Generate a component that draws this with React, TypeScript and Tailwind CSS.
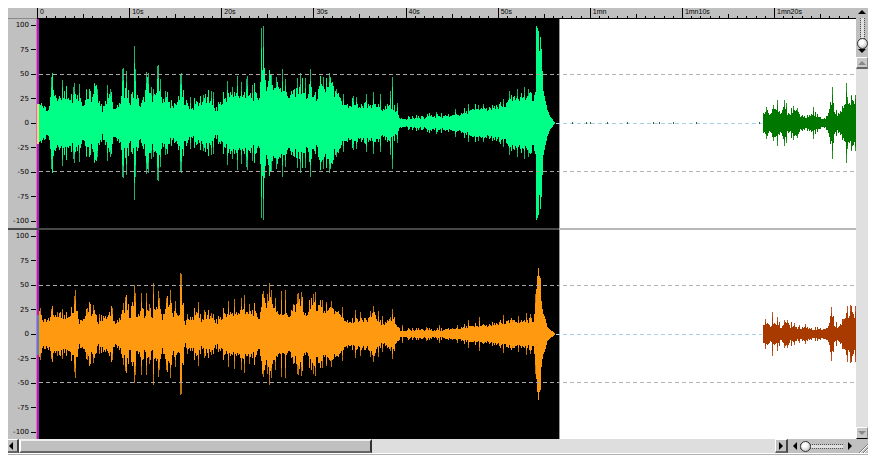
import { useState } from "react";
import clsx from "clsx";

type Point = [number, number];

type Clip = {
    color: string;
    peakColor: string;
    envelope: Point[];
    peaks: Point[];
};

type Track = {
    name: string;
    center: number;
    selected: Clip;
    rest: Clip;
    specks: number[];
};

const PLOT_LEFT = 39;
const PLOT_WIDTH = 817;
const PLOT_HEIGHT = 209;
const SELECTION_END = 559;

const levels = [100, 75, 50, 25, 0, -25, -50, -75, -100];
const times = ["0", "10s", "20s", "30s", "40s", "50s", "1mn", "1mn10s", "1mn20s"];

const left: Track = {
    name: "Left channel",
    center: 104,
    selected: {
        color: "#00ff87",
        peakColor: "#1fb56e",
        envelope: [
            [39, 18], [43, 18], [48, 12], [50, 30], [52, 38], [55, 26], [58, 27], [60, 24], [62, 34], [66, 30],
            [69, 26], [72, 24], [75, 30], [79, 26], [83, 20], [86, 28], [90, 24], [94, 30], [98, 26], [102, 14],
            [106, 22], [110, 28], [114, 15], [119, 18], [122, 30], [126, 36], [129, 18], [132, 24], [136, 30],
            [140, 17], [144, 27], [147, 42], [150, 28], [154, 24], [158, 30], [162, 26], [166, 25], [170, 20],
            [173, 14], [176, 22], [180, 27], [184, 24], [188, 18], [192, 16], [196, 20], [200, 22], [204, 23],
            [208, 24], [212, 17], [216, 14], [220, 17], [224, 26], [230, 29], [240, 27], [250, 29], [259, 28],
            [261, 55], [264, 50], [266, 42], [270, 43], [274, 37], [279, 40], [284, 36], [289, 28], [293, 26],
            [297, 33], [302, 33], [307, 28], [312, 29], [316, 28], [320, 36], [325, 35], [328, 36], [331, 44],
            [334, 30], [338, 25], [344, 19], [350, 17], [354, 20], [360, 17], [365, 20], [370, 16], [376, 18],
            [382, 16], [388, 17], [394, 16], [399, 5], [405, 4], [412, 5], [420, 5], [430, 7], [440, 7],
            [450, 7], [460, 9], [468, 12], [476, 14], [486, 14], [496, 16], [504, 18], [512, 23], [518, 28],
            [526, 27], [534, 28], [535, 28], [536, 97], [538, 92], [539, 72], [540, 86], [541, 74], [542, 52],
            [543, 32], [545, 22], [547, 13], [550, 6], [554, 1],
        ],
        peaks: [
            [51, 46], [62, 43], [73, 36], [74, 40], [79, 39], [86, 34], [94, 40], [97, 34], [107, 38], [110, 34],
            [122, 54], [123, 55], [126, 52], [134, 77], [135, 54], [146, 51], [148, 50], [151, 36], [153, 34],
            [157, 57], [158, 58], [160, 44], [165, 32], [180, 48], [181, 50], [190, 26], [203, 28], [211, 32],
            [213, 31], [227, 42], [232, 36], [237, 47], [241, 41], [246, 44], [247, 47], [252, 38], [261, 95],
            [263, 97], [271, 49], [276, 46], [282, 54], [285, 44], [297, 45], [300, 50], [305, 45], [310, 54],
            [323, 46], [329, 50], [330, 46], [336, 34], [343, 29], [353, 27], [356, 26], [366, 29], [373, 31],
            [380, 29], [390, 32], [392, 46], [397, 20], [436, 11], [455, 14], [468, 19], [478, 18], [483, 19],
            [503, 24], [509, 32], [517, 34], [524, 36], [528, 34],
        ],
    },
    rest: {
        color: "#007800",
        peakColor: "#2d902d",
        envelope: [
            [763, 11], [767, 14], [769, 7], [773, 13], [776, 16], [779, 9], [784, 18], [787, 9], [791, 10],
            [796, 13], [800, 8], [805, 5], [809, 7], [813, 9], [817, 7], [822, 5], [825, 5], [828, 11],
            [831, 18], [833, 16], [836, 9], [839, 10], [842, 15], [845, 22], [849, 20], [853, 22], [855, 26],
        ],
        peaks: [
            [766, 16], [773, 18], [777, 23], [784, 23], [786, 20], [793, 17], [797, 15], [813, 16], [832, 36],
            [846, 40], [847, 26], [851, 28], [855, 28],
        ],
    },
    specks: [572, 586, 590, 607, 627, 653, 659, 673, 696, 759],
};

const right: Track = {
    name: "Right channel",
    center: 104,
    selected: {
        color: "#ff9a10",
        peakColor: "#c0750e",
        envelope: [
            [39, 22], [42, 15], [46, 14], [49, 16], [51, 22], [55, 18], [60, 21], [66, 18], [70, 20], [74, 30],
            [76, 28], [79, 13], [83, 17], [88, 24], [93, 20], [97, 11], [101, 17], [106, 17], [111, 22],
            [115, 11], [119, 14], [123, 24], [126, 36], [129, 14], [134, 32], [137, 16], [141, 28], [145, 18],
            [149, 25], [153, 19], [158, 28], [162, 18], [166, 30], [170, 28], [173, 16], [176, 26], [178, 16],
            [181, 34], [185, 12], [189, 17], [193, 18], [197, 20], [201, 15], [206, 18], [212, 15], [216, 13],
            [220, 13], [224, 22], [229, 21], [233, 20], [238, 21], [242, 26], [247, 20], [252, 24], [256, 20],
            [259, 17], [262, 33], [267, 34], [272, 32], [277, 22], [282, 22], [286, 22], [290, 18], [294, 24],
            [300, 34], [304, 20], [308, 22], [313, 34], [317, 28], [322, 24], [327, 23], [331, 26], [336, 20],
            [341, 17], [346, 13], [352, 12], [357, 15], [362, 15], [368, 15], [373, 21], [378, 13], [384, 11],
            [389, 14], [393, 18], [396, 9], [401, 3], [410, 4], [420, 4], [440, 4], [455, 5], [464, 7],
            [474, 8], [485, 8], [496, 10], [506, 12], [516, 13], [526, 14], [533, 15], [535, 25], [536, 50],
            [538, 66], [539, 58], [540, 56], [541, 30], [543, 20], [545, 15], [547, 7], [550, 4], [554, 1],
        ],
        peaks: [
            [40, 26], [51, 25], [57, 22], [62, 25], [74, 38], [75, 44], [87, 26], [93, 29], [99, 20], [112, 26],
            [123, 31], [125, 37], [134, 49], [135, 41], [141, 41], [146, 41], [149, 30], [153, 51], [158, 43],
            [159, 36], [166, 36], [170, 44], [175, 33], [180, 61], [181, 60], [187, 20], [194, 25], [198, 32],
            [204, 24], [211, 21], [228, 33], [234, 35], [241, 36], [244, 39], [249, 30], [262, 35], [263, 43],
            [267, 40], [269, 51], [271, 44], [275, 36], [281, 43], [285, 44], [293, 30], [297, 40], [298, 41],
            [301, 42], [309, 28], [313, 40], [315, 42], [322, 34], [326, 32], [331, 33], [342, 27], [355, 24],
            [360, 22], [370, 23], [373, 28], [378, 23], [382, 18], [390, 17], [392, 25], [402, 9], [426, 7],
            [439, 9], [452, 6], [457, 9], [468, 14], [479, 17], [492, 11], [503, 19], [512, 14], [518, 18],
            [526, 21], [530, 20], [535, 40],
        ],
    },
    rest: {
        color: "#a83a00",
        peakColor: "#b95625",
        envelope: [
            [763, 10], [766, 13], [770, 7], [773, 10], [777, 11], [781, 7], [786, 14], [790, 8], [795, 7],
            [800, 6], [805, 6], [812, 5], [820, 5], [826, 6], [829, 11], [832, 20], [834, 10], [838, 7],
            [842, 13], [846, 20], [849, 17], [851, 22], [855, 19],
        ],
        peaks: [
            [765, 15], [772, 22], [777, 17], [784, 14], [787, 14], [794, 11], [799, 9], [805, 10], [831, 27],
            [843, 15], [847, 28], [850, 29], [852, 22], [855, 28],
        ],
    },
    specks: [],
};

function amplitudeAt(envelope: Point[], x: number) {
    const next = envelope.findIndex((p) => p[0] >= x);
    if (next <= 0) return envelope[0][1];
    const [x0, a0] = envelope[next - 1];
    const [x1, a1] = envelope[next];
    return a0 + ((a1 - a0) * (x - x0)) / (x1 - x0);
}

// Repeatable value between 0 and 1
function noise(n: number) {
    const v = Math.sin(n * 12.9898) * 43758.5453;
    return v - Math.floor(v);
}

// One closed 1px column per sample
function bar(x: number, center: number, amp: number) {
    const a = Math.max(1, Math.round(amp));
    return `M${x - PLOT_LEFT} ${center - a}h1v${a * 2}h-1z`;
}

function bodyPath(clip: Clip, center: number) {
    const start = clip.envelope[0][0];
    const end = clip.envelope[clip.envelope.length - 1][0];
    let d = "";
    for (let x = start; x <= end; x++) {
        let amp = amplitudeAt(clip.envelope, x);
        const fading = x > 541 && x < 560;
        if (amp <= 50 && !fading) {
            amp *= 0.76 + noise(x) * 0.36;
            // every few samples one stands out
            if (noise(x + 500) > 0.8) amp = amp * 1.22 + 1;
        }
        d += bar(x, center, amp);
    }
    return d;
}

const Waveform = ({ track }: { track: Track }) => {
    const split = SELECTION_END - PLOT_LEFT;
    const { center, selected, rest } = track;

    return (
        <svg
            role="img"
            aria-label={track.name}
            viewBox={`0 0 ${PLOT_WIDTH} ${PLOT_HEIGHT}`}
            preserveAspectRatio="none"
            shapeRendering="crispEdges"
            className="block h-[209px] w-full min-w-0 flex-1"
        >
            <rect width={PLOT_WIDTH} height={PLOT_HEIGHT} fill="#fff" />
            <rect width={split} height={PLOT_HEIGHT} fill="#000" />
            <rect x={split} width="1" height={PLOT_HEIGHT} fill="#999" />
            {[selected, rest].map((clip) => (
                <g key={clip.color}>
                    <path fill={clip.peakColor} d={clip.peaks.map(([x, a]) => bar(x, center, a)).join("")} />
                    <path fill={clip.color} d={clip.peaks.map(([x, a]) => bar(x, center, a * 0.78)).join("")} />
                    <path fill={clip.color} d={bodyPath(clip, center)} />
                </g>
            ))}
            {[center - 49, center + 48].map((y) => (
                <g key={y} strokeDasharray="4 3">
                    <path d={`M0 ${y + 0.5}H${split}`} stroke="#a8a8a8" />
                    <path d={`M${split + 4} ${y + 0.5}H${PLOT_WIDTH}`} stroke="#b4b4b4" />
                </g>
            ))}
            <path d={`M${split - 3} ${center + 0.5}H723`} stroke="#a9cfe9" strokeDasharray="4 3" />
            {track.specks.map((x) => (
                <rect key={x} x={x - PLOT_LEFT} y={center - 1} width="1" height="2" fill="#246b3a" />
            ))}
        </svg>
    );
};

const Scale = ({ cursor }: { cursor: string }) => (
    <>
        <div className="flex w-7 shrink-0 flex-col justify-between pt-[2px] pb-[3px] text-[7px]">
            {levels.map((level) => (
                <div key={level} className="flex h-2 items-center justify-end gap-[2px] leading-[8px]">
                    <span>{level}</span>
                    <span className="h-px w-[5px] bg-black"></span>
                </div>
            ))}
        </div>
        {/* Play cursor */}
        <div className="flex w-[3px] shrink-0 items-center border-l border-[#dd66dd] bg-[#a028a8]">
            <div className={clsx("h-[40px] w-full", cursor)}></div>
        </div>
    </>
);

const Ruler = () => (
    <div className="flex h-[11px] min-w-0 flex-1 overflow-hidden border-b border-black">
        {times.map((time) => (
            <div key={time} className="relative flex w-[11.25%] shrink-0 items-end border-l border-black">
                {Array.from({ length: 10 }, (_, i) => (
                    <span
                        key={i}
                        className={clsx("flex-1", i > 0 && "border-l border-black", i === 5 ? "h-1" : "h-[2px]")}
                    ></span>
                ))}
                <span className="absolute top-0 left-[2px] font-['Liberation_Sans',Arial,sans-serif] text-[7px] leading-[8px]">
                    {time}
                </span>
            </div>
        ))}
    </div>
);

const arrows = {
    up: "M0 4L4 0L8 4z",
    down: "M0 0L4 4L8 0z",
    left: "M4 0L0 4L4 8z",
    right: "M0 0L4 4L0 8z",
};

const Arrow = ({ dir, className = "fill-black" }: { dir: keyof typeof arrows; className?: string }) => {
    const flat = dir === "up" || dir === "down";
    return (
        <svg width={flat ? 8 : 4} height={flat ? 4 : 8} className={clsx("block shrink-0", className)}>
            <path d={arrows[dir]} />
        </svg>
    );
};

const thumb =
    "[&::-webkit-slider-thumb]:size-[11px] [&::-webkit-slider-thumb]:appearance-none [&::-webkit-slider-thumb]:rounded-full [&::-webkit-slider-thumb]:border [&::-webkit-slider-thumb]:border-[#333] [&::-webkit-slider-thumb]:bg-[radial-gradient(circle_at_40%_35%,#fff_25%,#aaa)]";

const App = () => {
    const [vertical, setVertical] = useState(100);
    const [horizontal, setHorizontal] = useState(0);

    return (
        <main className="bg-white pt-2 pr-[2px] pl-2 font-['DejaVu_Sans',Verdana,sans-serif] text-black">
            <div className="flex bg-[#c0c0c0]">
                <div className="min-w-0 flex-1">
                    <div className="flex">
                        <div className="w-[29px] shrink-0 border-b border-[#888]"></div>
                        <Ruler />
                    </div>
                    <div className="flex">
                        <Scale cursor="bg-[#eedc60]" />
                        <Waveform track={left} />
                    </div>
                    <div className="flex h-[2px]">
                        <div className="w-[65%] bg-[#484848]"></div>
                        <div className="flex-1 bg-[#b8b8b8]"></div>
                    </div>
                    <div className="flex">
                        <Scale cursor="bg-[#3c8ec8]" />
                        <Waveform track={right} />
                    </div>
                </div>

                {/* Vertical zoom and scroll */}
                <div className="flex w-3 shrink-0 flex-col items-center">
                    <div className="flex h-[49px] flex-col items-center pt-[2px]">
                        <button aria-label="Zoom in vertically" className="h-1">
                            <Arrow dir="up" />
                        </button>
                        <input
                            type="range"
                            aria-label="Vertical zoom"
                            value={vertical}
                            onChange={(e) => setVertical(Number(e.target.value))}
                            className={clsx(
                                "mt-1 h-[31px] w-[11px] appearance-none bg-[linear-gradient(90deg,transparent_1px,#e0e0e0_1px_4px,transparent_4px),repeating-linear-gradient(#555_0_1px,transparent_1px_2px)] bg-[length:5px_100%] bg-center bg-no-repeat [writing-mode:vertical-lr]",
                                thumb
                            )}
                        />
                        <button aria-label="Zoom out vertically" className="h-1">
                            <Arrow dir="down" />
                        </button>
                    </div>
                    <button
                        aria-label="Scroll up"
                        className="flex h-3 w-full items-center justify-center border-t border-r border-b-2 border-l border-t-white border-r-[#888] border-b-[#666] border-l-white bg-[#c8c8c8]"
                    >
                        <Arrow dir="up" className="fill-[#888]" />
                    </button>
                    <div className="w-full flex-1 bg-[#e0e0e0]"></div>
                    <button
                        aria-label="Scroll down"
                        className="flex h-3 w-full items-center justify-center border-t border-r border-b border-l border-t-white border-r-[#888] border-b-black border-l-white bg-[#c8c8c8]"
                    >
                        <Arrow dir="down" className="fill-[#888]" />
                    </button>
                </div>
            </div>

            {/* Horizontal scroll and zoom */}
            <div className="flex h-[15px] border-b border-white bg-[#c0c0c0]">
                <button
                    aria-label="Scroll left"
                    className="flex w-[11px] shrink-0 items-center border-t border-r-2 border-b-2 border-t-white border-r-[#444] border-b-[#666] pl-px"
                >
                    <Arrow dir="left" />
                </button>
                <div className="flex min-w-0 flex-1 bg-[#dedede]">
                    <div className="w-[46.75%] border-t-2 border-r-2 border-b-2 border-l-2 border-t-[#eee] border-r-[#333] border-b-[#666] border-l-white bg-[#c0c0c0]"></div>
                </div>
                <button
                    aria-label="Scroll right"
                    className="flex w-[13px] shrink-0 items-center justify-center border-t border-r-2 border-b-2 border-l border-t-white border-r-[#444] border-b-[#666] border-l-white"
                >
                    <Arrow dir="right" />
                </button>
                <div className="flex w-20 shrink-0 items-center pl-[5px]">
                    <button aria-label="Zoom out horizontally">
                        <Arrow dir="left" />
                    </button>
                    <input
                        type="range"
                        aria-label="Horizontal zoom"
                        value={horizontal}
                        onChange={(e) => setHorizontal(Number(e.target.value))}
                        className={clsx(
                            "ml-[3px] h-[11px] w-[43px] appearance-none bg-[linear-gradient(transparent_1px,#e0e0e0_1px_4px,transparent_4px),repeating-linear-gradient(90deg,#555_0_1px,transparent_1px_2px)] bg-[length:100%_5px] bg-center bg-no-repeat",
                            thumb
                        )}
                    />
                    <button aria-label="Zoom in horizontally" className="ml-[5px]">
                        <Arrow dir="right" />
                    </button>
                    <svg width="9" height="11" className="ml-auto block self-end" fill="none">
                        <path d="M0 11L9 2M4 11L9 6" stroke="#777" />
                        <path d="M1 11L9 3M5 11L9 7" stroke="#fff" />
                    </svg>
                </div>
            </div>
            <div className="h-px bg-[#b0b0b0]"></div>
        </main>
    );
};

export default App;
